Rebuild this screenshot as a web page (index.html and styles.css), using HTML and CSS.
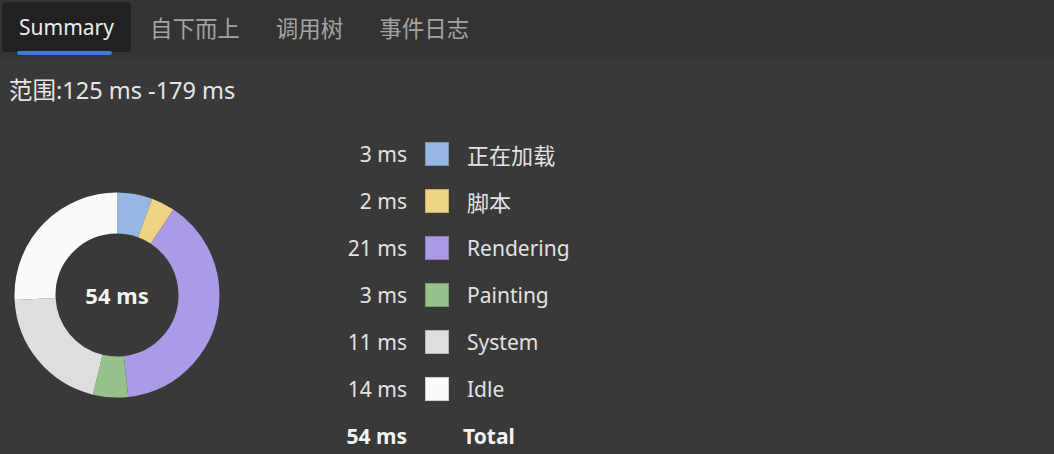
FILE: index.html
```html
<!DOCTYPE html>
<html lang="zh">
<head>
<meta charset="utf-8">
<title>Summary</title>
<link rel="stylesheet" href="styles.css">
</head>
<body>
<div class="tabbar">
  <div class="tab active">Summary</div>
  <div class="tab"><span class="cjk">自下而上</span></div>
  <div class="tab"><span class="cjk">调用树</span></div>
  <div class="tab"><span class="cjk">事件日志</span></div>
</div>
<div class="range"><span class="cjk">范围</span>:125 ms -179 ms</div>
<div class="content">
  <div class="donut">
    <svg width="206" height="206" viewBox="0 0 206 206">
      <g transform="rotate(-90 103 103)" fill="none" stroke-width="41">
        <circle cx="103" cy="103" r="82" stroke="#96b7e6" stroke-dasharray="28.623 515.221" stroke-dashoffset="0"/>
        <circle cx="103" cy="103" r="82" stroke="#eed385" stroke-dasharray="19.082 515.221" stroke-dashoffset="-28.623"/>
        <circle cx="103" cy="103" r="82" stroke="#ac9ae6" stroke-dasharray="200.364 515.221" stroke-dashoffset="-47.705"/>
        <circle cx="103" cy="103" r="82" stroke="#96c18b" stroke-dasharray="28.623 515.221" stroke-dashoffset="-248.069"/>
        <circle cx="103" cy="103" r="82" stroke="#dedede" stroke-dasharray="104.952 515.221" stroke-dashoffset="-276.692"/>
        <circle cx="103" cy="103" r="82" stroke="#fafafa" stroke-dasharray="133.577 515.221" stroke-dashoffset="-381.644"/>
      </g>
    </svg>
    <div class="donut-label">54 ms</div>
  </div>
  <div class="legend">
    <div class="val">3 ms</div><div class="sw loading"></div><div class="lbl"><span class="cjk">正在加载</span></div>
    <div class="val">2 ms</div><div class="sw scripting"></div><div class="lbl"><span class="cjk">脚本</span></div>
    <div class="val">21 ms</div><div class="sw rendering"></div><div class="lbl">Rendering</div>
    <div class="val">3 ms</div><div class="sw painting"></div><div class="lbl">Painting</div>
    <div class="val">11 ms</div><div class="sw system"></div><div class="lbl">System</div>
    <div class="val">14 ms</div><div class="sw idle"></div><div class="lbl">Idle</div>
    <div class="val total">54 ms</div><div></div><div class="lbl total total-lbl">Total</div>
  </div>
</div>
</body>
</html>
```
FILE: styles.css
```css
html, body {
  margin: 0;
  padding: 0;
  height: 100%;
  overflow: hidden;
}
body {
  background: #393939;
  font-family: "Noto Sans", "Noto Sans CJK SC", sans-serif;
  font-size: 20px;
  color: #e2e2e2;
}
.cjk {
  font-family: "Noto Sans CJK SC", sans-serif;
  font-size: 1.07em;
}
.tabbar {
  height: 57px;
  box-sizing: border-box;
  background: #333333;
  display: flex;
  align-items: flex-start;
  padding: 2px 0 0 2px;
  gap: 2px;
  font-size: 21px;
}
.tab {
  position: relative;
  height: 50px;
  padding: 0 17px;
  display: flex;
  align-items: center;
  color: #a3a3a3;
  border-radius: 4px;
  white-space: nowrap;
}
.tab.active {
  background: #212121;
  color: #ececec;
}
.tab.active::after {
  content: "";
  position: absolute;
  left: 15px;
  right: 19px;
  bottom: -3px;
  height: 4px;
  border-radius: 2px;
  background: #3a7bd5;
}
.range {
  margin: 20px 0 0 9px;
  height: 24px;
  line-height: 24px;
  font-size: 23.5px;
  color: #e6e6e6;
}
.range .cjk {
  font-size: 1em;
}
.content {
  display: flex;
  align-items: center;
  padding-left: 14px;
  margin-top: 29px;
}
.donut {
  position: relative;
  width: 206px;
  height: 206px;
  flex: none;
}
.donut svg {
  display: block;
}
.donut-label {
  position: absolute;
  inset: 0;
  display: flex;
  align-items: center;
  justify-content: center;
  font-weight: 700;
  font-size: 22px;
  color: #f2f2f2;
}
.legend {
  margin-left: 80px;
  display: grid;
  grid-template-columns: 107px 24px auto;
  grid-auto-rows: 47px;
  column-gap: 18px;
  align-items: center;
  font-size: 21px;
}
.legend .cjk {
  font-size: 1.05em;
}
.val {
  text-align: right;
  white-space: nowrap;
}
.lbl {
  white-space: nowrap;
}
.total {
  font-weight: 700;
  color: #f2f2f2;
}
.total-lbl {
  margin-left: -4px;
}
.sw {
  width: 24px;
  height: 24px;
  box-sizing: border-box;
  border: 1px solid rgba(0, 0, 0, 0.18);
}
.loading { background: #96b7e6; }
.scripting { background: #eed385; }
.rendering { background: #ac9ae6; }
.painting { background: #96c18b; }
.system { background: #dedede; }
.idle { background: #fafafa; }
```
